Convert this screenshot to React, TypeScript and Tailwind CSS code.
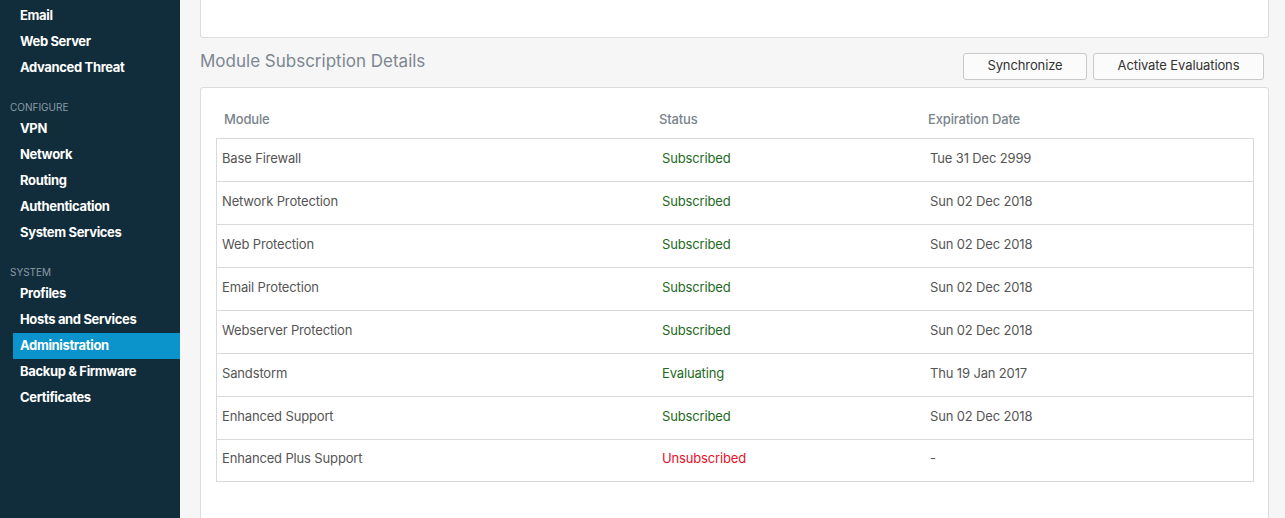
import React from 'react';

type NavSection = { label?: string; items: string[] };

const nav: NavSection[] = [
  { items: ['Email', 'Web Server', 'Advanced Threat'] },
  { label: 'Configure', items: ['VPN', 'Network', 'Routing', 'Authentication', 'System Services'] },
  { label: 'System', items: ['Profiles', 'Hosts and Services', 'Administration', 'Backup & Firmware', 'Certificates'] },
];

const modules = [
  { name: 'Base Firewall', status: 'Subscribed', date: 'Tue 31 Dec 2999' },
  { name: 'Network Protection', status: 'Subscribed', date: 'Sun 02 Dec 2018' },
  { name: 'Web Protection', status: 'Subscribed', date: 'Sun 02 Dec 2018' },
  { name: 'Email Protection', status: 'Subscribed', date: 'Sun 02 Dec 2018' },
  { name: 'Webserver Protection', status: 'Subscribed', date: 'Sun 02 Dec 2018' },
  { name: 'Sandstorm', status: 'Evaluating', date: 'Thu 19 Jan 2017' },
  { name: 'Enhanced Support', status: 'Subscribed', date: 'Sun 02 Dec 2018' },
  { name: 'Enhanced Plus Support', status: 'Unsubscribed', date: '-' },
];

function Sidebar() {
  return (
    <aside className="w-[180px] shrink-0 bg-[#112d3b] pt-[3px]">
      {nav.map((sec, i) => (
        <div key={i}>
          {sec.label && (
            <div className="pl-[10px] pt-[20px] mb-[3px] text-[10px] leading-[12px] uppercase text-[#8c9ba5]">
              {sec.label}
            </div>
          )}
          {sec.items.map(item => {
            const active = item === 'Administration';
            return (
              <div
                key={item}
                className={`h-[26px] flex items-center text-[13px] font-bold tracking-[-0.35px] text-white ${
                  active ? 'ml-[13px] pl-[7px] bg-[#0a94cb]' : 'pl-[20px]'
                }`}
              >
                {item}
              </div>
            );
          })}
        </div>
      ))}
    </aside>
  );
}

function statusColor(s: string) {
  if (s === 'Unsubscribed') return 'text-[#e6102c]';
  return 'text-[#1d6a22]';
}

export default function App() {
  return (
    <div
      className="flex h-[518px] overflow-hidden bg-[#f6f6f6]"
      style={{ fontFamily: 'Inter, "Noto Sans", sans-serif' }}
    >
      <Sidebar />

      <main className="flex-1 pl-[20px] pr-[16px]">
        {/* previous panel, mostly scrolled away */}
        <div className="h-[38px] bg-white border-x border-b border-[#dcdcdc] rounded-b-[3px]" />

        <div className="h-[49px] flex items-center justify-between">
          <h2 className="text-[17px] text-[#7d8792] pb-[1px]">Module Subscription Details</h2>
          <div className="flex gap-[6px] pr-[5px] pt-[7px]">
            <button className="w-[124px] h-[27px] bg-[#fbfbfb] border border-[#c9c9c9] rounded-[3px] text-[13px] tracking-[-0.1px] text-[#333]">
              Synchronize
            </button>
            <button className="w-[171px] h-[27px] bg-[#fbfbfb] border border-[#c9c9c9] rounded-[3px] text-[13px] tracking-[-0.1px] text-[#333]">
              Activate Evaluations
            </button>
          </div>
        </div>

        <div className="bg-white border border-[#dcdcdc] rounded-[3px] pl-[15px] pr-[14px] pt-[22px] h-[460px]">
          <div className="grid grid-cols-[440px_268px_1fr] h-[28px] text-[13px] font-medium tracking-[-0.15px] text-[#7a838c]">
            <div className="pl-[8px]">Module</div>
            <div className="pl-[3px]">Status</div>
            <div className="pl-[4px]">Expiration Date</div>
          </div>
          <div className="border border-[#dadada]">
            {modules.map((m, i) => (
              <div
                key={m.name}
                className={`grid grid-cols-[440px_268px_1fr] items-center pb-[3px] text-[13px] tracking-[-0.15px] text-[#555] ${
                  i === 0 ? 'h-[42px]' : i === modules.length - 1 ? 'h-[42px] border-t border-[#dadada]' : 'h-[43px] border-t border-[#dadada]'
                }`}
              >
                <div className="pl-[5px]">{m.name}</div>
                <div className={`pl-[5px] ${statusColor(m.status)}`}>{m.status}</div>
                <div className="pl-[5px]">{m.date}</div>
              </div>
            ))}
          </div>
        </div>
      </main>
    </div>
  );
}
